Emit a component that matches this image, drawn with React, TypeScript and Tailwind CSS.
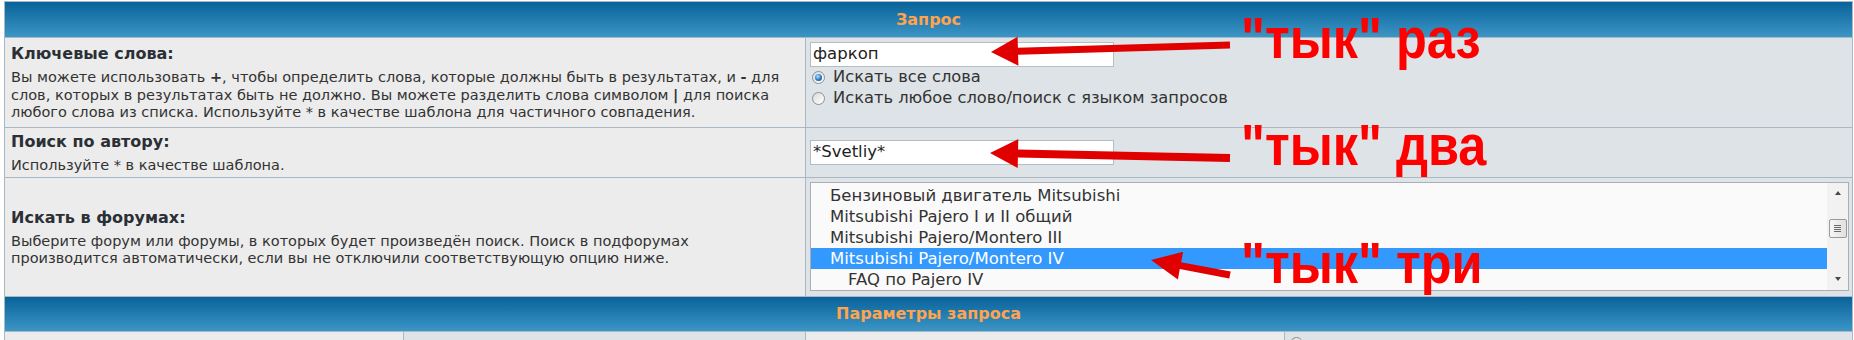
import React from "react";

type P = [number, number];

function arrow(tip: P, tail: P, headLen: number, headHalf: number, shaftHalf: number): string {
  const dx = tail[0] - tip[0];
  const dy = tail[1] - tip[1];
  const len = Math.hypot(dx, dy);
  const ux = dx / len;
  const uy = dy / len;
  const px = -uy;
  const py = ux;
  const bx = tip[0] + ux * headLen;
  const by = tip[1] + uy * headLen;
  const pts: P[] = [
    tip,
    [bx + px * headHalf, by + py * headHalf],
    [bx + px * shaftHalf, by + py * shaftHalf],
    [tail[0] + px * shaftHalf, tail[1] + py * shaftHalf],
    [tail[0] - px * shaftHalf, tail[1] - py * shaftHalf],
    [bx - px * shaftHalf, by - py * shaftHalf],
    [bx - px * headHalf, by - py * headHalf],
  ];
  return pts.map((p) => `${p[0].toFixed(1)},${p[1].toFixed(1)}`).join(" ");
}

const arrows = [
  arrow([991, 52], [1230, 45], 27, 14.5, 3.5),
  arrow([990, 153], [1230, 158], 28, 14.5, 4),
  arrow([1151, 260], [1230, 275], 30, 14, 3.5),
];

function Radio({ checked }: { checked?: boolean }) {
  return (
    <div className="flex h-[13px] w-[13px] shrink-0 items-center justify-center rounded-full border border-[#8d8f91] bg-[linear-gradient(135deg,#d9dadb,#ffffff)]">
      {checked && (
        <div className="h-[7px] w-[7px] rounded-full bg-[radial-gradient(circle_at_40%_35%,#b4e1ff,#2a78c8_55%,#0d3f7a)]" />
      )}
    </div>
  );
}

const items = [
  { t: "Бензиновый двигатель Mitsubishi", sub: false, sel: false },
  { t: "Mitsubishi Pajero I и II общий", sub: false, sel: false },
  { t: "Mitsubishi Pajero/Montero III", sub: false, sel: false },
  { t: "Mitsubishi Pajero/Montero IV", sub: false, sel: true },
  { t: "FAQ по Pajero IV", sub: true, sel: false },
];

export default function App() {
  return (
    <div className="relative h-[340px] w-[1854px] overflow-hidden bg-white font-['DejaVu_Sans',Verdana,sans-serif]">
      <div className="pl-[4px] pt-[1px]">
        <div className="grid w-[1849px] grid-cols-[800px_1046px] gap-px border border-[#a9b8c2] bg-[#a9b8c2]">
          {/* header 1 */}
          <div className="col-span-2 flex h-[35px] items-center justify-center bg-[linear-gradient(to_bottom,#09639a,#3b95c5)] text-[16px] font-bold text-[#ffa34f]">
            Запрос
          </div>

          {/* row 1 */}
          <div className="flex h-[89px] flex-col justify-center bg-[#ececec] px-[6px]">
            <div className="mb-[5px] text-[16px] font-bold leading-[21px] text-[#2b2f36]">Ключевые слова:</div>
            <div className="whitespace-nowrap text-[14.5px] leading-[17.5px] text-[#333]">
              Вы можете использовать <b>+</b>, чтобы определить слова, которые должны быть в результатах, и <b>-</b> для
              <br />
              слов, которых в результатах быть не должно. Вы можете разделить слова символом <b>|</b> для поиска
              <br />
              любого слова из списка. Используйте * в качестве шаблона для частичного совпадения.
            </div>
          </div>
          <div className="bg-[#dee3e7] pl-[4px] pt-[4px]">
            <div className="flex h-[25px] w-[304px] items-center border border-[#b4bcc4] bg-white pl-[2px] text-[16.5px] text-[#222]">
              фаркоп
            </div>
            <div className="flex h-[21px] items-center pl-[2px] text-[16.3px] text-[#333]">
              <Radio checked />
              <span className="ml-[8px]">Искать все слова</span>
            </div>
            <div className="flex h-[21px] items-center pl-[2px] text-[16.3px] text-[#333]">
              <Radio />
              <span className="ml-[8px]">Искать любое слово/поиск с языком запросов</span>
            </div>
          </div>

          {/* row 2 */}
          <div className="flex h-[49px] flex-col justify-center bg-[#ececec] px-[6px]">
            <div className="mb-[5px] text-[16px] font-bold leading-[21px] text-[#2b2f36]">Поиск по автору:</div>
            <div className="whitespace-nowrap text-[14.5px] leading-[17.5px] text-[#333]">
              Используйте * в качестве шаблона.
            </div>
          </div>
          <div className="flex items-center bg-[#dee3e7] pl-[4px]">
            <div className="flex h-[25px] w-[304px] items-center border border-[#b4bcc4] bg-white pl-[2px] text-[16.5px] text-[#222]">
              *Svetliy*
            </div>
          </div>

          {/* row 3 */}
          <div className="flex h-[118px] flex-col justify-center bg-[#ececec] px-[6px]">
            <div className="mb-[5px] text-[16px] font-bold leading-[21px] text-[#2b2f36]">Искать в форумах:</div>
            <div className="whitespace-nowrap text-[14.5px] leading-[17.5px] text-[#333]">
              Выберите форум или форумы, в которых будет произведён поиск. Поиск в подфорумах
              <br />
              производится автоматически, если вы не отключили соответствующую опцию ниже.
            </div>
          </div>
          <div className="bg-[#dee3e7] pl-[4px] pt-[4px]">
            <div className="flex h-[109px] w-[1039px] border border-[#a9afb5] bg-[#fafafa]">
              <div className="flex-1 overflow-hidden pt-[2px] text-[16.5px] text-[#333]">
                {items.map((it) => (
                  <div
                    key={it.t}
                    className={
                      "h-[21px] whitespace-nowrap leading-[21px] " +
                      (it.sub ? "pl-[37px] " : "pl-[19px] ") +
                      (it.sel ? "bg-[#3399ff] text-white" : "")
                    }
                  >
                    {it.t}
                  </div>
                ))}
              </div>
              <div className="flex w-[21px] flex-col items-center bg-[#f2f2f2] pb-[9px] pt-[8px]">
                <div className="h-0 w-0 border-x-[3.5px] border-b-[4px] border-x-transparent border-b-[#4a4a4a]" />
                <div className="mt-[24px] flex h-[19px] w-[18px] flex-col items-center justify-center gap-[1px] rounded-[2px] border border-[#979a9d] bg-[linear-gradient(to_right,#f6f6f6,#e0e0e0)]">
                  <div className="h-px w-[7px] bg-[#6a6a6a]" />
                  <div className="h-px w-[7px] bg-[#6a6a6a]" />
                  <div className="h-px w-[7px] bg-[#6a6a6a]" />
                  <div className="h-px w-[7px] bg-[#6a6a6a]" />
                </div>
                <div className="flex-1" />
                <div className="h-0 w-0 border-x-[3.5px] border-t-[4px] border-x-transparent border-t-[#4a4a4a]" />
              </div>
            </div>
          </div>

          {/* header 2 */}
          <div className="col-span-2 flex h-[34px] items-center justify-center bg-[linear-gradient(to_bottom,#09639a,#3b95c5)] text-[16px] font-bold text-[#ffa34f]">
            Параметры запроса
          </div>

          {/* row 4 */}
          <div className="col-span-2 grid h-[30px] grid-cols-[398px_401px_478px_567px] gap-px">
            <div className="bg-[#ececec]" />
            <div className="bg-[#dee3e7]" />
            <div className="bg-[#ececec]" />
            <div className="bg-[#dee3e7] pl-[5px] pt-[5px]">
              <Radio />
            </div>
          </div>
        </div>
      </div>

      {/* annotations */}
      <svg className="pointer-events-none absolute left-0 top-0" width={1854} height={340}>
        {arrows.map((p, i) => (
          <polygon key={i} points={p} fill="#e00000" />
        ))}
      </svg>
      <div className="absolute left-[1241px] top-[9px] origin-left scale-x-[0.87] whitespace-nowrap font-['Liberation_Sans',Arial,sans-serif] text-[58px] font-bold leading-[58px] text-[#ff0000]">
        "тык" раз
      </div>
      <div className="absolute left-[1241px] top-[116px] origin-left scale-x-[0.87] whitespace-nowrap font-['Liberation_Sans',Arial,sans-serif] text-[58px] font-bold leading-[58px] text-[#ff0000]">
        "тык" два
      </div>
      <div className="absolute left-[1241px] top-[234px] origin-left scale-x-[0.87] whitespace-nowrap font-['Liberation_Sans',Arial,sans-serif] text-[58px] font-bold leading-[58px] text-[#ff0000]">
        "тык" три
      </div>
    </div>
  );
}
